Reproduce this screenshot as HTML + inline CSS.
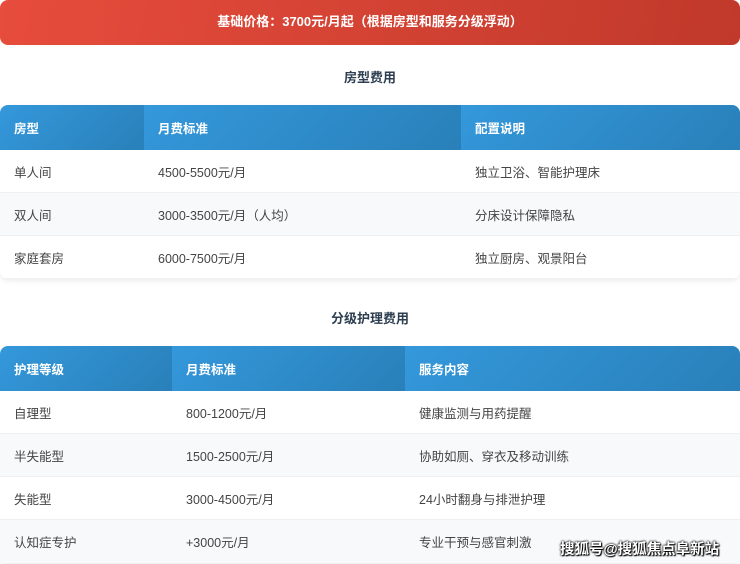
<!DOCTYPE html><html><head><meta charset="utf-8"><style>
*{margin:0;padding:0;box-sizing:border-box}
body{width:740px;height:564px;overflow:hidden;background:#fff;font-family:"Liberation Sans","Noto Sans CJK SC",sans-serif;position:relative}
.banner{position:absolute;left:0;top:0;width:740px;height:45px;border-radius:8px;background:linear-gradient(100deg,#e74c3c,#c0392b);color:#fff;font-weight:bold;font-size:13px;text-align:center;line-height:43px}
.title{position:absolute;left:0;width:740px;text-align:center;font-weight:bold;font-size:13px;color:#2c3e50}
.tbl{position:absolute;left:0;width:740px;border-radius:8px;overflow:hidden;box-shadow:0 2px 6px rgba(0,0,0,.08)}
.row{display:flex;height:43px;align-items:center;font-size:12.5px;color:#444;border-bottom:1px solid #eef0f2}
.row.alt{background:#f7f9fa}
.row div{padding-left:14px;height:100%;display:flex;align-items:center}
.hd{height:45px;color:#fff;font-weight:bold;border:none}
.hd div{background:linear-gradient(135deg,#3498db,#2980b9)}
.wm{position:absolute;left:560px;top:538px;font-size:14.5px;font-weight:bold;color:#fff;text-shadow:0 0 2px #000,0 0 2px #000,1px 1px 1px #000}
</style></head><body>
<div class="banner">基础价格：3700元/月起（根据房型和服务分级浮动）</div>
<div class="title" style="top:67px">房型费用</div>
<div class="tbl" style="top:105px">
<div class="row hd"><div style="width:144px">房型</div><div style="width:317px">月费标准</div><div style="flex:1">配置说明</div></div>
<div class="row"><div style="width:144px">单人间</div><div style="width:317px">4500-5500元/月</div><div style="flex:1">独立卫浴、智能护理床</div></div>
<div class="row alt"><div style="width:144px">双人间</div><div style="width:317px">3000-3500元/月（人均）</div><div style="flex:1">分床设计保障隐私</div></div>
<div class="row"><div style="width:144px">家庭套房</div><div style="width:317px">6000-7500元/月</div><div style="flex:1">独立厨房、观景阳台</div></div>
</div>
<div class="title" style="top:308px">分级护理费用</div>
<div class="tbl" style="top:346px">
<div class="row hd"><div style="width:172px">护理等级</div><div style="width:233px">月费标准</div><div style="flex:1">服务内容</div></div>
<div class="row"><div style="width:172px">自理型</div><div style="width:233px">800-1200元/月</div><div style="flex:1">健康监测与用药提醒</div></div>
<div class="row alt"><div style="width:172px">半失能型</div><div style="width:233px">1500-2500元/月</div><div style="flex:1">协助如厕、穿衣及移动训练</div></div>
<div class="row"><div style="width:172px">失能型</div><div style="width:233px">3000-4500元/月</div><div style="flex:1">24小时翻身与排泄护理</div></div>
<div class="row alt" style="height:44px"><div style="width:172px">认知症专护</div><div style="width:233px">+3000元/月</div><div style="flex:1">专业干预与感官刺激</div></div>
</div>
<div class="wm">搜狐号@搜狐焦点阜新站</div>
</body></html>
